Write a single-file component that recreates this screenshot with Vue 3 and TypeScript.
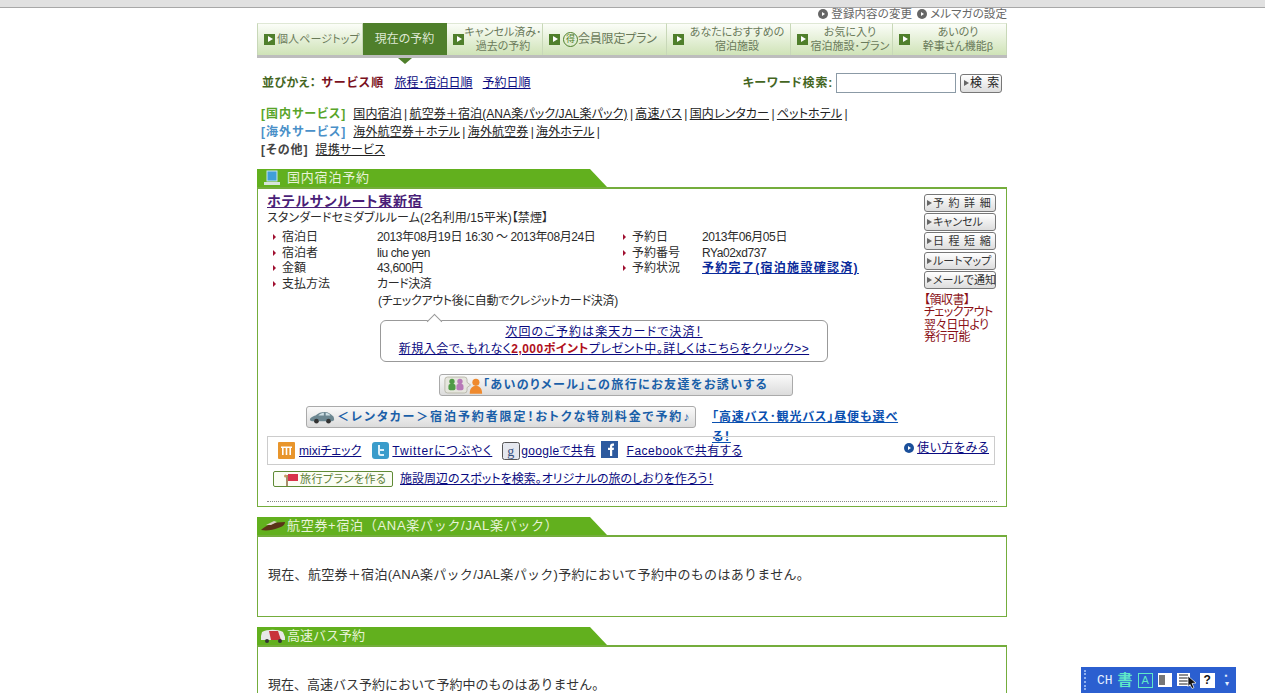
<script setup lang="ts">
const navItems = [
  { lines: ['個人ページトップ'], w: 106, single: true },
  { lines: ['現在の予約'], w: 84, active: true },
  { lines: ['キャンセル済み･', '過去の予約'], w: 96 },
  { lines: ['会員限定プラン'], w: 124, single: true, toku: true },
  { lines: ['あなたにおすすめの', '宿泊施設'], w: 124 },
  { lines: ['お気に入り', '宿泊施設･プラン'], w: 102 },
  { lines: ['あいのり', '幹事さん機能β'], w: 114 }
]
const leftRows = [
  ['宿泊日', '2013年08月19日 16:30 ～ 2013年08月24日'],
  ['宿泊者', 'liu che yen'],
  ['金額', '43,600円'],
  ['支払方法', 'カード決済']
]
const rightRows = [
  ['予約日', '2013年06月05日'],
  ['予約番号', 'RYa02xd737']
]
const sideButtons = ['予 約 詳 細', 'キャンセル', '日 程 短 縮', 'ルートマップ', 'メールで通知']
</script>

<template>
  <div class="page">
    <div class="browser-edge"></div>
    <main class="wrap">
      <div class="top-links">
        <a class="top-link"><i class="dot"></i>登録内容の変更</a>
        <a class="top-link"><i class="dot"></i>メルマガの設定</a>
      </div>

      <nav class="nav">
        <a
          v-for="item in navItems"
          :key="item.lines[0]"
          class="nav-item"
          :class="{ active: item.active }"
          :style="{ width: item.w + 'px' }"
        >
          <i v-if="!item.active" class="nav-mark"></i>
          <i v-if="item.toku" class="toku">得</i>
          <span class="nav-text" :class="{ left: item.single }">
            <span v-for="line in item.lines" :key="line">{{ line }}</span>
          </span>
        </a>
      </nav>

      <div class="sort-row">
        <div class="sort">
          <b class="sort-label">並びかえ：</b>
          <b class="sort-current">サービス順</b>
          <a class="sort-link">旅程･宿泊日順</a>
          <a class="sort-link">予約日順</a>
        </div>
        <form class="search" @submit.prevent>
          <b class="search-label">キーワード検索:</b>
          <input class="search-input" type="text" />
          <button class="search-btn"><i class="tri"></i>検 索</button>
        </form>
      </div>

      <div class="services">
        <p>
          <b class="svc-green">[国内サービス]</b>
          <a>国内宿泊</a> | <a>航空券＋宿泊(ANA楽パック/JAL楽パック)</a> | <a>高速バス</a> | <a>国内レンタカー</a> | <a>ペットホテル</a> |
        </p>
        <p>
          <b class="svc-blue">[海外サービス]</b>
          <a>海外航空券＋ホテル</a> | <a>海外航空券</a> | <a>海外ホテル</a> |
        </p>
        <p>
          <b class="svc-gray">[その他]</b>
          <a>提携サービス</a>
        </p>
      </div>

      <section class="section first">
        <h2 class="sec-head">
          <svg class="sec-icon" width="18" height="16" viewBox="0 0 18 16">
            <rect x="4" y="1" width="10" height="10" fill="#3f9fd8" stroke="#c8e4f2" />
            <rect x="1" y="12" width="16" height="3" fill="#d8e4dc" />
          </svg>
          <span class="pad-title">国内宿泊予約</span>
        </h2>
        <div class="sec-body hotel">
          <div class="hotel-main">
            <div class="hotel-left">
              <a class="hotel-name">ホテルサンルート東新宿</a>
              <p class="room">スタンダードセミダブルルーム(2名利用/15平米)【禁煙】</p>
              <div class="details">
                <div class="detail-col">
                  <div v-for="row in leftRows" :key="row[0]" class="detail-row">
                    <i class="bullet"></i><span class="label">{{ row[0] }}</span><span class="value">{{ row[1] }}</span>
                  </div>
                </div>
                <div class="detail-col right">
                  <div v-for="row in rightRows" :key="row[0]" class="detail-row">
                    <i class="bullet"></i><span class="label short">{{ row[0] }}</span><span class="value">{{ row[1] }}</span>
                  </div>
                  <div class="detail-row">
                    <i class="bullet"></i><span class="label short">予約状況</span><a class="status">予約完了(宿泊施設確認済)</a>
                  </div>
                </div>
              </div>
              <p class="pay-note">(チェックアウト後に自動でクレジットカード決済)</p>
              <a class="bubble">
                <span class="bubble-line one">次回のご予約は楽天カードで決済！</span>
                <span class="bubble-line two">新規入会で、もれなく<b>2,000ポイント</b>プレゼント中。詳しくはこちらをクリック&gt;&gt;</span>
              </a>
            </div>
            <aside class="side">
              <a v-for="b in sideButtons" :key="b" class="side-btn"><i class="tri"></i>{{ b }}</a>
              <p class="receipt">【領収書】<br />チェックアウト<br />翌々日中より<br />発行可能</p>
            </aside>
          </div>

          <a class="pill invite">
            <svg width="39" height="18" viewBox="0 0 44 20">
              <path d="M4 1h19a3 3 0 0 1 3 3v3l4 3-4 3v3a3 3 0 0 1-3 3H4a3 3 0 0 1-3-3V4a3 3 0 0 1 3-3z" fill="#e6e6de" stroke="#b5b5a8" />
              <circle cx="9" cy="6" r="3" fill="#4f9a45" /><rect x="5" y="9" width="8" height="7" rx="2" fill="#4f9a45" />
              <circle cx="18" cy="6" r="3" fill="#b77ab8" /><rect x="14" y="9" width="8" height="7" rx="2" fill="#b77ab8" />
              <circle cx="36" cy="7" r="4" fill="#ef8a2e" /><path d="M29 20c0-7 3-9 7-9s7 2 7 9z" fill="#ef8a2e" />
            </svg>
            <b>「あいのりメール」この旅行にお友達をお誘いする</b>
          </a>

          <div class="promo-row">
            <a class="pill car">
              <svg width="26" height="14" viewBox="0 0 28 15">
                <path d="M1 11c0-3 3-4 6-5 3-3 6-4 10-4 4 0 6 2 8 4 2 1 2 3 2 5l-2 1H3z" fill="#6c8791" />
                <path d="M10 6c2-2 4-3 6-3v3zM18 3c2 0 4 1 5 3h-5z" fill="#cfe0e6" />
                <circle cx="8" cy="12" r="2.5" fill="#333" /><circle cx="21" cy="12" r="2.5" fill="#333" />
              </svg>
              <b>＜レンタカー＞宿泊予約者限定！おトクな特別料金で予約♪</b>
            </a>
            <a class="bus-link">「高速バス･観光バス」昼便も選べる！</a>
          </div>

          <div class="share">
            <a class="share-item mixi">
              <svg width="17" height="17" viewBox="0 0 17 17"><rect width="17" height="17" rx="1" fill="#e8952c" /><path d="M4 13V6h1.6v7zM7.7 13V6h1.6v7zM11.4 13V6H13v7zM3 4.500h11v1.500H3z" fill="#fff" /></svg>
              <span class="u">mixiチェック</span>
            </a>
            <a class="share-item tw">
              <svg width="17" height="17" viewBox="0 0 17 17"><rect width="17" height="17" rx="3" fill="#3a9ccb" /><path d="M6 3v8c0 2 1 3 3 3h3v-2H9c-1 0-1-.5-1-1V9h4V7H8V3z" fill="#dff2fb" /></svg>
              <span class="u">Twitterにつぶやく</span>
            </a>
            <a class="share-item tight">
              <svg width="18" height="18" viewBox="0 0 18 18"><rect x=".5" y=".5" width="17" height="17" rx="2" fill="#e5e8ef" stroke="#555" /><text x="9" y="14" text-anchor="middle" font-size="14" font-family="Liberation Serif, serif" fill="#36507f">g</text></svg>
              <span class="u">googleで共有</span>
            </a>
            <a class="share-item fb">
              <svg width="17" height="17" viewBox="0 0 17 17"><rect width="17" height="17" fill="#2d5a9e" /><path d="M9 15V9H7V6.800h2V5.300C9 3.500 10 2.500 11.700 2.500H13v2.200h-1c-.6 0-.8.300-.8.800v1.300H13L12.700 9h-1.500v6z" fill="#fff" /></svg>
              <span class="u fb-text">Facebookで共有する</span>
            </a>
            <a class="howto"><i class="dot blue"></i><span class="u">使い方をみる</span></a>
          </div>

          <div class="plan-row">
            <a class="plan-btn">
              <svg width="16" height="13" viewBox="0 0 16 13"><path d="M4 2v11" stroke="#8a6a3a" stroke-width="1.500" /><path d="M5 1h10v7H5z" fill="#d8344c" /><circle cx="2.500" cy="3" r="1.500" fill="#c99a63" /></svg>
              旅行プランを作る
            </a>
            <a class="plan-link">施設周辺のスポットを検索。オリジナルの旅のしおりを作ろう！</a>
          </div>
          <div class="dotted"></div>
        </div>
      </section>

      <section class="section">
        <h2 class="sec-head">
          <svg class="sec-icon wide" width="26" height="14" viewBox="0 0 26 14">
            <path d="M1 11C6 6 14 3 25 3c0 3-3 5-7 6-5 2-11 3-17 2z" fill="#5a3318" />
            <path d="M6 6l8-4 3 1-6 3z" fill="#d8d0c0" />
          </svg>
          <span class="sec-long">航空券+宿泊（ANA楽パック/JAL楽パック）</span>
        </h2>
        <div class="sec-body empty long">現在、航空券＋宿泊(ANA楽パック/JAL楽パック)予約において予約中のものはありません。</div>
      </section>

      <section class="section">
        <h2 class="sec-head">
          <svg class="sec-icon wide" width="26" height="14" viewBox="0 0 26 14">
            <path d="M2 3c5-3 16-3 21 0l2 5v3H1V7z" fill="#e8e8e8" />
            <path d="M9 2h9l3 9H11z" fill="#c8323a" />
            <circle cx="7" cy="12" r="2" fill="#333" /><circle cx="20" cy="12" r="2" fill="#333" />
          </svg>
          <span class="bus-title">高速バス予約</span>
        </h2>
        <div class="sec-body empty">現在、高速バス予約において予約中のものはありません。</div>
      </section>
    </main>

    <div class="ime">
      <i class="ime-grip"></i>
      <span class="ime-ch">CH</span>
      <span class="ime-zh">書</span>
      <span class="ime-a">A</span>
      <svg width="14" height="14" viewBox="0 0 14 14"><rect width="14" height="14" fill="#fff" /><rect x="1" y="2" width="6" height="10" fill="#777" /></svg>
      <svg class="ime-lines" width="20" height="17" viewBox="0 0 20 17">
        <rect y="1" width="13" height="13" fill="#fff" />
        <path d="M2 3h9M2 6h9M2 9h9M2 12h9" stroke="#222" />
        <path d="M11 4l8 7-4 .5 2 4-2 1-2-4-2 2z" fill="#111" stroke="#fff" stroke-width=".7" />
      </svg>
      <span class="ime-help">?</span>
      <span class="ime-more">▪<br />▾</span>
    </div>
  </div>
</template>

<style>
html,
body {
  margin: 0;
  background: #fff;
}
</style>

<style scoped>
.page {
  position: relative;
  height: 693px;
  overflow: hidden;
  background: #fff;
  color: #2b2b2b;
  font: 12px/16px "Liberation Sans", "Noto Sans CJK JP", sans-serif;
  font-feature-settings: "palt";
}
a {
  cursor: pointer;
}
p {
  margin: 0;
}
i {
  font-style: normal;
}
.u {
  text-decoration: underline;
}
.browser-edge {
  height: 7px;
  background: #e1e1e1;
  border-bottom: 1px solid #a8a8a8;
}
.wrap {
  width: 750px;
  margin-left: 257px;
}
.top-links {
  display: flex;
  justify-content: flex-end;
  gap: 5px;
  height: 15px;
  line-height: 12px;
  font-size: 11.500px;
  letter-spacing: 0.1px;
  color: #666;
}
.top-link {
  display: flex;
  align-items: flex-start;
  gap: 3px;
}
.dot {
  display: inline-block;
  position: relative;
  flex: none;
  width: 10px;
  height: 10px;
  margin-top: 1px;
  border-radius: 50%;
  background: #666;
}
.dot::after {
  content: "";
  position: absolute;
  left: 4px;
  top: 2.500px;
  border-left: 3px solid #fff;
  border-top: 2.500px solid transparent;
  border-bottom: 2.500px solid transparent;
}
.dot.blue {
  background: #1a4f9a;
  margin-top: 0;
}
.nav {
  display: flex;
  height: 32px;
  border-bottom: 3px solid #bdbdbd;
}
.nav-item {
  position: relative;
  box-sizing: border-box;
  display: flex;
  align-items: center;
  padding: 0 0 1px 6px;
  background: linear-gradient(#fbfdf8, #cfe3b7);
  border-right: 1px solid #c8d8b8;
  border-top: 1px solid #dfe8d5;
  color: #6a7a5a;
  font-size: 11px;
  line-height: 14px;
}
.nav-item:first-child {
  border-left: 1px solid #c8d8b8;
}
.nav-mark {
  flex: none;
  position: relative;
  width: 11px;
  height: 11px;
  background: #4f7f2b;
}
.nav-mark::after {
  content: "";
  position: absolute;
  left: 3.500px;
  top: 2px;
  border-left: 5px solid #fff;
  border-top: 3.500px solid transparent;
  border-bottom: 3.500px solid transparent;
}
.nav-text {
  flex: 1;
  display: flex;
  flex-direction: column;
  align-items: center;
  white-space: nowrap;
}
.nav-text.left {
  flex: none;
  margin-left: 3px;
  font-size: 12px;
  letter-spacing: -0.2px;
}
.nav-item:first-child .nav-text.left {
  margin-left: 2px;
  font-size: 11px;
  letter-spacing: 0.1px;
}
.toku {
  flex: none;
  box-sizing: border-box;
  width: 15px;
  height: 15px;
  margin-left: 3px;
  margin-right: -3px;
  border: 1px solid #4f7f2b;
  border-radius: 50%;
  color: #4f7f2b;
  font-size: 9px;
  line-height: 13px;
  text-align: center;
}
.nav-item.active {
  justify-content: center;
  padding-left: 0;
  background: #4f7f2b;
  border-color: #4f7f2b;
  color: #dfe8d5;
  font-size: 12px;
}
.nav-item.active::after {
  content: "";
  position: absolute;
  left: 35px;
  bottom: -9px;
  border-top: 6px solid #4f7f2b;
  border-left: 7px solid transparent;
  border-right: 7px solid transparent;
}
.sort-row {
  display: flex;
  justify-content: space-between;
  align-items: center;
  height: 22px;
  margin-top: 14px;
  padding: 0 5px;
}
.sort {
  display: flex;
  align-items: center;
}
.sort-label {
  color: #44661f;
  letter-spacing: 0.4px;
  margin-right: 5px;
}
.sort-current {
  color: #7a1020;
  letter-spacing: 1.2px;
  margin-right: 10px;
}
.sort-link {
  color: #0a0a80;
  text-decoration: underline;
  margin-right: 10px;
}
.search {
  display: flex;
  align-items: center;
}
.search-label {
  color: #44661f;
  letter-spacing: 0.8px;
}
.search-input {
  box-sizing: border-box;
  width: 120px;
  height: 20px;
  margin: 0 4px 0 3px;
  border: 1px solid #8b9aa6;
  background: #fff;
}
.search-btn {
  box-sizing: border-box;
  display: flex;
  align-items: center;
  gap: 1px;
  height: 19px;
  width: 42px;
  padding: 0 0 0 3px;
  border: 1px solid #777;
  border-radius: 3px;
  background: linear-gradient(#fff, #ddd);
  color: #222;
  font: 12px/16px "Liberation Sans", "Noto Sans CJK JP", sans-serif;
  word-spacing: 2px;
}
.tri {
  flex: none;
  width: 0;
  height: 0;
  border-left: 5px solid #666;
  border-top: 3.500px solid transparent;
  border-bottom: 3.500px solid transparent;
}
.services {
  margin-top: 11px;
  line-height: 18px;
  padding-left: 4px;
  height: 53px;
  white-space: nowrap;
  word-spacing: -1px;
}
.services a {
  color: #222;
  letter-spacing: 0.1px;
  text-decoration: underline;
}
.services b {
  letter-spacing: 1px;
  margin-right: 7px;
}
.svc-green {
  color: #58a52a;
}
.svc-blue {
  color: #4a90c8;
}
.svc-gray {
  color: #444;
}
.section {
  margin-top: 10px;
}
.section.first {
  margin-top: 11px;
}
.sec-head {
  display: flex;
  align-items: center;
  gap: 1px;
  box-sizing: border-box;
  width: 350px;
  height: 18px;
  margin: 0;
  padding-left: 3px;
  background: #62b01e;
  clip-path: polygon(0 0, 333px 0, 350px 18px, 0 18px);
  color: #e8f3d8;
  font-size: 13px;
  font-weight: normal;
  line-height: 18px;
  white-space: nowrap;
}
.sec-icon {
  flex: none;
}
.sec-icon:not(.wide) {
  margin-left: 3px;
}
.pad-title {
  margin-left: 5px;
  letter-spacing: 0.8px;
}
.sec-long {
  font-feature-settings: normal;
  letter-spacing: 0.7px;
}
.bus-title {
  font-feature-settings: normal;
}
.sec-body {
  box-sizing: border-box;
  border: 2px solid #74ad3c;
  border-width: 2px 1px 1px;
}
.sec-body.hotel {
  height: 320px;
  padding: 4px 9px 0 9px;
}
.sec-body.empty {
  height: 82px;
  padding-top: 29px;
  padding-left: 10px;
  font-size: 13px;
  font-feature-settings: normal;
  line-height: 18px;
  color: #333;
  white-space: nowrap;
}
.sec-body.empty.long {
  letter-spacing: 0.3px;
}
.section:last-child .sec-body.empty {
  height: 60px;
}
.hotel-main {
  display: flex;
  justify-content: space-between;
  height: 172px;
}
.hotel-left {
  width: 640px;
}
.hotel-name {
  display: block;
  color: #4a1f78;
  font-size: 14px;
  font-weight: bold;
  letter-spacing: 0.7px;
  line-height: 17px;
  text-decoration: underline;
}
.room {
  letter-spacing: 0.05px;
  line-height: 16px;
}
.details {
  display: flex;
  margin-top: 3px;
  padding-left: 6px;
}
.detail-col {
  flex: 0 0 350px;
}
.detail-col.right {
  flex: 1;
}
.detail-row {
  display: flex;
  align-items: center;
  height: 15.700px;
  white-space: nowrap;
}
.bullet {
  flex: none;
  width: 0;
  height: 0;
  margin-right: 6px;
  border-left: 3px solid #a01030;
  border-top: 3px solid transparent;
  border-bottom: 3px solid transparent;
}
.label {
  flex: none;
  width: 95px;
}
.label.short {
  width: 70px;
}
.value {
  letter-spacing: -0.4px;
}
.status {
  color: #0a2a9a;
  font-weight: bold;
  letter-spacing: 1.3px;
  text-decoration: underline;
}
.pay-note {
  margin-top: 1px;
  margin-left: 111px;
  letter-spacing: -0.3px;
}
.bubble {
  position: relative;
  display: block;
  box-sizing: border-box;
  width: 448px;
  height: 42px;
  margin: 11px 0 0 113px;
  padding-top: 3px;
  border: 1px solid #999;
  border-radius: 6px;
  background: #fff;
  color: #0a0a80;
  text-align: center;
  white-space: nowrap;
}
.bubble::before {
  content: "";
  position: absolute;
  left: 48px;
  top: -11px;
  width: 10px;
  height: 10px;
  background: #fff;
  border-left: 1px solid #999;
  border-top: 1px solid #999;
  transform: translateY(6px) rotate(45deg);
}
.bubble-line {
  display: block;
  line-height: 17px;
  text-decoration: underline;
}
.bubble-line.one {
  letter-spacing: 1.1px;
}
.bubble-line.two {
  letter-spacing: 0.45px;
}
.bubble b {
  color: #b01020;
}
.side {
  width: 72px;
  flex: none;
  margin-right: 1px;
  padding-top: 1px;
}
.side-btn {
  box-sizing: border-box;
  display: flex;
  align-items: center;
  gap: 1px;
  height: 18px;
  margin-bottom: 1.200px;
  padding-left: 2px;
  border: 1px solid #777;
  border-radius: 3px;
  background: linear-gradient(#fff, #ddd);
  color: #333;
  font-size: 11px;
  word-spacing: 1.5px;
  white-space: nowrap;
}
.receipt {
  margin-top: 5px;
  color: #8a1016;
  letter-spacing: -0.5px;
  line-height: 12.500px;
  white-space: nowrap;
}
.pill {
  box-sizing: border-box;
  display: flex;
  align-items: center;
  height: 22px;
  border: 1px solid #aaa;
  border-radius: 3px;
  background: linear-gradient(#fafafa, #dcdcdc);
  color: #1a5fa8;
  white-space: nowrap;
}
.pill.invite {
  width: 354px;
  margin: 9px 0 0 172px;
  padding-left: 4px;
  letter-spacing: 1.4px;
}
.promo-row {
  position: relative;
  display: flex;
  height: 22px;
  margin: 10px 0 0 39px;
}
.pill.car {
  width: 390px;
  padding-left: 2px;
  gap: 2px;
  letter-spacing: 1.9px;
}
.bus-link {
  width: 188px;
  margin: 0 0 0 16px;
  color: #0a50b0;
  font-weight: bold;
  letter-spacing: 0.9px;
  line-height: 20px;
  padding-top: 1px;
  text-decoration: underline;
}
.share {
  position: relative;
  box-sizing: border-box;
  display: flex;
  align-items: center;
  height: 29px;
  width: 728px;
  margin-top: 8px;
  padding-left: 10px;
  border: 1px solid #ccc;
  color: #0a0a80;
  letter-spacing: 0.5px;
}
.share-item {
  display: flex;
  align-items: center;
  gap: 4px;
  margin-right: 10px;
}
.share-item.mixi {
  letter-spacing: 0;
  margin-right: 11px;
}
.share-item.tw {
  gap: 3px;
  letter-spacing: 0.9px;
}
.share-item.tight {
  gap: 1px;
  margin-right: 5px;
  letter-spacing: 0.35px;
}
.share-item.fb {
  gap: 9px;
  margin-top: -3px;
}
.fb-text {
  margin-top: 3px;
}
.howto {
  position: absolute;
  right: 5px;
  top: 3px;
  display: flex;
  align-items: center;
  gap: 3px;
}
.plan-row {
  display: flex;
  align-items: center;
  gap: 7px;
  margin-top: 6px;
  padding-left: 6px;
  height: 16px;
}
.plan-btn {
  box-sizing: border-box;
  display: flex;
  align-items: center;
  width: 120px;
  height: 16px;
  padding-left: 9px;
  gap: 1px;
  border: 1px solid #5f8a35;
  border-radius: 2px;
  background: #fbfdf4;
  color: #5f7f3a;
  font-size: 11px;
  letter-spacing: 0.5px;
  white-space: nowrap;
}
.plan-link {
  color: #0a0a80;
  text-decoration: underline;
  white-space: nowrap;
}
.dotted {
  margin-top: 14px;
  border-top: 1px dotted #888;
}
.ime {
  position: absolute;
  left: 1081px;
  top: 667px;
  box-sizing: border-box;
  display: flex;
  align-items: center;
  width: 155px;
  height: 26px;
  padding-left: 3px;
  gap: 5px;
  background: #2b5fd0;
  color: #e6f0ff;
}
.ime-grip {
  width: 2px;
  height: 20px;
  margin-right: 4px;
  border-left: 2px dotted #8fb0f0;
}
.ime-ch {
  font: 13px "Liberation Mono", monospace;
}
.ime-zh {
  color: #5fe8c8;
  font-size: 15px;
  font-weight: bold;
}
.ime-a {
  box-sizing: border-box;
  width: 15px;
  height: 15px;
  border: 1px solid #5fe8c8;
  color: #5fe8c8;
  font-size: 11px;
  line-height: 13px;
  text-align: center;
}
.ime-lines {
  margin-right: -2px;
}
.ime-help {
  box-sizing: border-box;
  width: 15px;
  height: 15px;
  background: #fff;
  color: #111;
  font-size: 12px;
  font-weight: bold;
  line-height: 15px;
  text-align: center;
}
.ime-more {
  font-size: 8px;
  line-height: 8px;
  margin-left: 5px;
}
</style>
